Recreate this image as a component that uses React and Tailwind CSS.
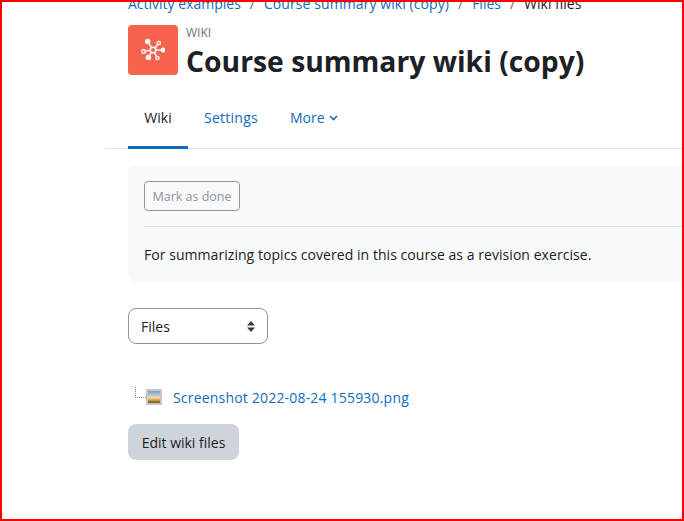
import React from 'react';

const WikiIcon = () => (
  <svg width="24" height="24" viewBox="0 0 24 24" fill="none" stroke="white" strokeWidth="1.4">
    <circle cx="12" cy="12" r="2.8" />
    <line x1="10.5" y1="9.6" x2="7" y2="3.6" />
    <line x1="14" y1="10" x2="17" y2="6" />
    <line x1="15" y1="12" x2="21" y2="12" />
    <line x1="13.5" y1="14.6" x2="15.5" y2="18" />
    <line x1="10.6" y1="14.4" x2="8" y2="18" />
    <line x1="9.2" y1="12.4" x2="4" y2="13.4" />
    <circle cx="6.6" cy="3.4" r="2" fill="white" />
    <circle cx="17.8" cy="5" r="1.6" />
    <circle cx="22" cy="12" r="1.7" fill="white" />
    <circle cx="16.4" cy="20" r="1.6" />
    <circle cx="7.4" cy="19.4" r="2" fill="white" />
    <circle cx="2.6" cy="13.6" r="1.8" />
  </svg>
);

const ImageIcon = () => (
  <svg width="16" height="16" viewBox="0 0 16 16">
    <defs>
      <linearGradient id="sky" x1="0" y1="0" x2="0" y2="1">
        <stop offset="0" stopColor="#7f9cc0" />
        <stop offset="0.55" stopColor="#e6dcc8" />
        <stop offset="0.72" stopColor="#e9a93c" />
        <stop offset="1" stopColor="#57503a" />
      </linearGradient>
    </defs>
    <rect width="16" height="16" fill="#c8c8c8" />
    <rect x="2" y="2" width="12" height="12" fill="url(#sky)" />
  </svg>
);

export default function App() {
  return (
    <div className="w-[684px] h-[521px] border-2 border-[#ff0000] overflow-hidden bg-white text-[#1d2125] font-['Open_Sans','Noto_Sans',sans-serif] text-[14px]">
      <div className="pl-[126px] mt-[-9px] flex gap-[9px] whitespace-nowrap h-[20px] items-center">
        <span className="text-[#0f6cbf]">Activity examples</span>
        <span className="text-[#6a737b]">/</span>
        <span className="text-[#0f6cbf] tracking-[0.08px]">Course summary wiki (copy)</span>
        <span className="text-[#6a737b]">/</span>
        <span className="text-[#0f6cbf]">Files</span>
        <span className="text-[#6a737b]">/</span>
        <span>Wiki files</span>
      </div>

      <div className="pl-[126px] mt-[12px] flex items-start gap-[8px]">
        <div className="w-[50px] h-[50px] rounded-[4px] bg-[#f7634d] flex items-center justify-center">
          <WikiIcon />
        </div>
        <div className="flex flex-col pt-px">
          <span className="text-[12px] leading-[14px] text-[#6a737b]">WIKI</span>
          <h1 className="mt-[4px] text-[28.3px] leading-[34px] font-bold whitespace-nowrap">Course summary wiki (copy)</h1>
        </div>
      </div>

      <div className="ml-[103px] mt-[22px] pl-[23px] h-[49px] border-b border-[#dee2e6] flex text-[14px]">
        <div className="w-[60px] h-[49px] border-b-[3px] border-[#0f6cbf] flex items-center justify-center pb-[12px]">Wiki</div>
        <div className="ml-[16px] h-[49px] flex items-center pb-[14px] text-[#0f6cbf] tracking-[0.25px]">Settings</div>
        <div className="ml-[32px] h-[49px] flex items-center gap-[4px] pb-[14px] text-[#0f6cbf]">
          More
          <svg width="9" height="6" viewBox="0 0 9 6" fill="none" stroke="#0f6cbf" strokeWidth="1.6">
            <path d="M1 1l3.5 3.5L8 1" />
          </svg>
        </div>
      </div>

      <div className="ml-[126px] mt-[16px] w-[600px] h-[117px] rounded-[8px] bg-[#f8f9fa] pt-[16px] pl-[16px]">
        <div className="w-[96px] h-[30px] rounded-[4px] border border-[#8f959e] text-[#8f959e] text-[12.5px] pt-[2px] flex items-center justify-center whitespace-nowrap">Mark as done</div>
        <div className="mt-[15px] border-t border-[#dee2e6]" />
        <p className="mt-[17px] whitespace-nowrap tracking-[0.05px]">For summarizing topics covered in this course as a revision exercise.</p>
      </div>

      <div className="ml-[126px] mt-[26px] w-[140px] h-[36px] rounded-[8px] border border-[#8f959e] pl-[12px] pr-[12px] flex items-center justify-between">
        <span>Files</span>
        <svg width="8" height="11" viewBox="0 0 8 11" fill="#343a40">
          <path d="M4 0l4 4.4H0zM4 11L0 6.6h8z" />
        </svg>
      </div>

      <div className="ml-[133px] mt-[41px] h-[24px] flex items-center whitespace-nowrap">
        <div className="w-[11px] h-[11px] border-l border-b border-dotted border-[#888] mb-[10px]" />
        <ImageIcon />
        <span className="ml-[11px] text-[#0f6cbf] tracking-[0.19px]">Screenshot 2022-08-24 155930.png</span>
      </div>

      <div className="ml-[126px] mt-[15px] w-[111px] h-[36px] rounded-[8px] bg-[#ced4da] flex items-center justify-center">Edit wiki files</div>
    </div>
  );
}
